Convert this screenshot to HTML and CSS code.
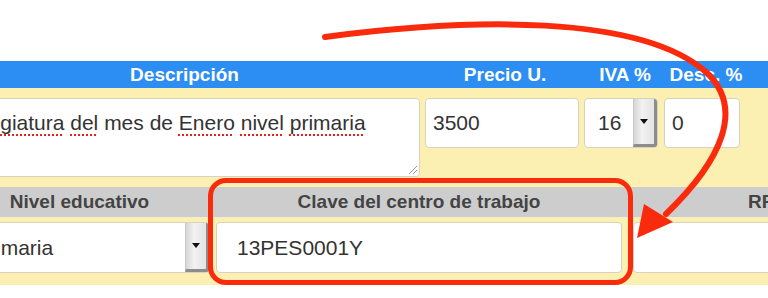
FILE: index.html
```html
<!DOCTYPE html>
<html>

<head>
	<title>Factura - conceptos</title>
	<link rel="stylesheet" href="styles.css">
</head>

<body>
	<div class="sheet">
		<section class="block items">
			<div class="head blue">
				<div class="cell">Descripción</div>
				<div class="cell shift">Precio U.</div>
				<div class="cell shift">IVA %</div>
				<div class="cell shift">Desc. %</div>
			</div>
			<div class="row">
				<div class="field area">
					Cole<span class="typo">giatura</span> <span class="typo">del</span> mes de
					<span class="typo">Enero</span> <span class="typo">nivel</span> <span class="typo">primaria</span>
					<span class="grip"></span>
				</div>
				<div class="field price">3500</div>
				<div class="field select iva"><span class="value">16</span><span class="btn"></span></div>
				<div class="field desc">0</div>
			</div>
		</section>

		<section class="block school">
			<div class="head grey">
				<div class="cell">Nivel educativo</div>
				<div class="cell">Clave del centro de trabajo</div>
				<div class="cell">RFC</div>
			</div>
			<div class="row">
				<div class="field select level"><span class="value">Primaria</span><span class="btn"></span></div>
				<div class="field clave">13PES0001Y</div>
				<div class="field rfc"></div>
			</div>
		</section>
	</div>

	<div class="highlight"></div>
	<svg class="arrow" width="768" height="298" viewBox="0 0 768 298">
		<path d="M325 37 C 470 18, 640 14, 706 72 C 745 108, 722 160, 666 214"
			fill="none" stroke="#fa2b0c" stroke-width="6" stroke-linecap="round" />
		<polygon points="637,238 644,204 673,222" fill="#fa2b0c" />
	</svg>
</body>

</html>
```

FILE: styles.css
```css
html,
body {
	margin: 0;
	overflow: hidden;
}

body {
	font-family: "Liberation Sans", Arial, sans-serif;
	background-color: white;
	width: 768px;
	height: 298px;
	position: relative;
}

.sheet {
	margin-left: -52px;
	width: 960px;
	padding-top: 61px;
}

.head {
	display: grid;
	font-size: 19px;
	font-weight: bold;
}

.cell {
	display: flex;
	align-items: center;
	justify-content: center;
	white-space: nowrap;
}

.cell.shift {
	padding-left: 8px;
}

.blue {
	background-color: #2c8ef2;
	color: white;
	height: 27px;
}

.grey {
	background-color: #cdcdcd;
	color: #444;
	height: 30px;
	border-bottom: 1px solid #f6edc4;
}

.block {
	background-color: #fcefb2;
}

.items .head,
.items .row {
	grid-template-columns: 473px 160px 80px 82px 1fr;
}

.school {
	padding: 9px 0 12px;
}

.school .head,
.school .row {
	grid-template-columns: 263px 416px 1fr;
}

.row {
	display: grid;
	align-items: start;
}

.items .row {
	padding-top: 10px;
	height: 80px;
}

.school .row {
	padding-top: 4px;
}

.field {
	background-color: white;
	border: 1px solid #d8d3c0;
	border-radius: 4px;
	box-sizing: border-box;
	height: 50px;
	font-size: 21px;
	color: #333;
	display: flex;
	align-items: center;
	padding-left: 7px;
	white-space: nowrap;
}

.area {
	margin-left: 1px;
	width: 471px;
	height: 79px;
	align-items: flex-start;
	padding-top: 12px;
	position: relative;
	display: block;
}

.typo {
	text-decoration: underline dotted #e0231b;
	text-underline-offset: 4px;
	text-decoration-thickness: 2px;
}

.grip {
	position: absolute;
	right: 2px;
	bottom: 2px;
	width: 10px;
	height: 10px;
	background: repeating-linear-gradient(135deg, transparent 0 2px, #999 2px 3px);
	clip-path: polygon(100% 0, 100% 100%, 0 100%);
}

.price {
	margin-left: 4px;
	width: 154px;
	height: 50px;
}

.select {
	padding-left: 0;
	overflow: hidden;
	justify-content: space-between;
}

.select .value {
	padding-left: 13px;
}

.btn {
	width: 20px;
	align-self: stretch;
	background: linear-gradient(to right, #d6d6d6, #f2f2f2 40%, #e4e4e4);
	border-left: 1px solid #c9c9c9;
	border-right: 3px solid #8d8d8d;
	border-bottom: 3px solid #8d8d8d;
	position: relative;
}

.btn::after {
	content: "";
	position: absolute;
	left: 6px;
	top: 50%;
	margin-top: -3px;
	border-left: 4px solid transparent;
	border-right: 4px solid transparent;
	border-top: 5px solid #111;
}

.iva {
	margin-left: 3px;
	width: 74px;
}

.desc {
	margin-left: 3px;
	width: 76px;
}

.level {
	margin-left: 12px;
	width: 250px;
	height: 51px;
}

.level .value {
	padding-left: 14px;
}

.clave {
	margin-left: 5px;
	width: 406px;
	height: 51px;
	padding-left: 20px;
}

.rfc {
	margin-left: 6px;
	height: 51px;
}

.highlight {
	position: absolute;
	left: 208px;
	top: 178px;
	width: 425px;
	height: 107px;
	box-sizing: border-box;
	border: 5px solid #fa2b0c;
	border-radius: 18px;
}

.arrow {
	position: absolute;
	left: 0;
	top: 0;
}
```
